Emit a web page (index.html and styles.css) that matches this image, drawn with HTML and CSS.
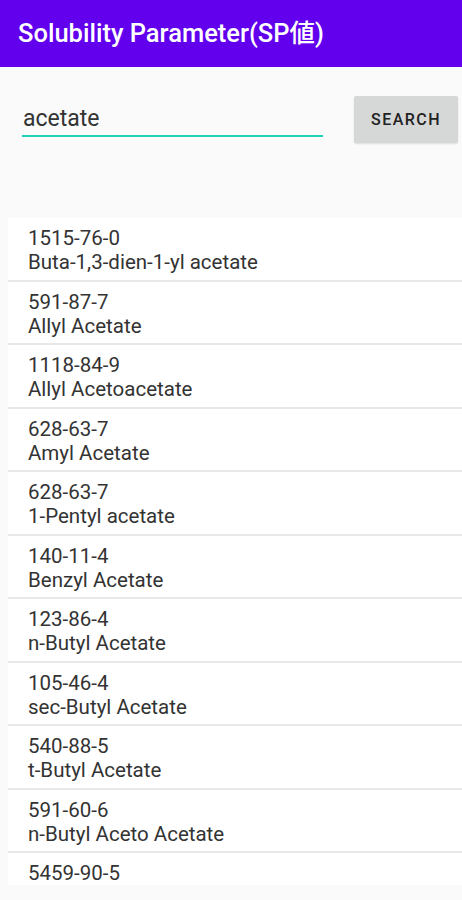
FILE: index.html
```html
<!DOCTYPE html>
<html lang="ja">

<head>
    <meta charset="UTF-8">
    <meta name="viewport" content="width=device-width, initial-scale=1.0">
    <title>Solubility Parameter</title>
    <link rel="stylesheet" href="styles.css">
</head>

<body>
    <header class="app-bar">
        <h1>Solubility Parameter(SP値)</h1>
    </header>

    <div class="search-row">
        <input type="text" class="query" value="acetate">
        <button class="search-btn">SEARCH</button>
    </div>

    <ul class="results">
        <li class="result"><span class="cas">1515-76-0</span><span class="name">Buta-1,3-dien-1-yl acetate</span></li>
        <li class="result"><span class="cas">591-87-7</span><span class="name">Allyl Acetate</span></li>
        <li class="result"><span class="cas">1118-84-9</span><span class="name">Allyl Acetoacetate</span></li>
        <li class="result"><span class="cas">628-63-7</span><span class="name">Amyl Acetate</span></li>
        <li class="result"><span class="cas">628-63-7</span><span class="name">1-Pentyl acetate</span></li>
        <li class="result"><span class="cas">140-11-4</span><span class="name">Benzyl Acetate</span></li>
        <li class="result"><span class="cas">123-86-4</span><span class="name">n-Butyl Acetate</span></li>
        <li class="result"><span class="cas">105-46-4</span><span class="name">sec-Butyl Acetate</span></li>
        <li class="result"><span class="cas">540-88-5</span><span class="name">t-Butyl Acetate</span></li>
        <li class="result"><span class="cas">591-60-6</span><span class="name">n-Butyl Aceto Acetate</span></li>
        <li class="result last"><span class="cas">5459-90-5</span></li>
    </ul>
</body>

</html>
```

FILE: styles.css
```css
* {
    padding: 0;
    margin: 0;
    box-sizing: border-box;
}

body {
    background-color: #fafafa;
    font-family: Roboto, "Noto Sans CJK JP", sans-serif;
    color: #333;
}

.app-bar {
    height: 67px;
    background-color: #6200ee;
    padding-left: 18px;
}

.app-bar h1 {
    font-size: 25.5px;
    font-weight: 500;
    line-height: 67px;
    color: white;
}

.search-row {
    display: flex;
    align-items: flex-start;
    padding: 29px 4px 0 22px;
}

.query {
    width: 301px;
    height: 41px;
    padding: 5px 0 0 1px;
    border: none;
    border-bottom: 2px solid #1fd0bb;
    background: transparent;
    font-family: Roboto, sans-serif;
    font-size: 23px;
    color: #333;
    outline: none;
}

.search-btn {
    margin-left: auto;
    width: 104px;
    height: 47px;
    border: none;
    border-radius: 2px;
    background-color: #d6d7d7;
    box-shadow: 0 1px 2px rgba(0, 0, 0, 0.12);
    font-family: Roboto, sans-serif;
    font-size: 16px;
    font-weight: 500;
    letter-spacing: 0.09em;
    color: #222;
}

.results {
    list-style: none;
    margin: 75px 0 0 8px;
    height: 667px;
    overflow: hidden;
    background-color: white;
}

.result {
    display: flex;
    flex-direction: column;
    height: 63.5px;
    padding: 10px 0 0 20px;
    border-bottom: 2px solid #e8e8e8;
    font-size: 20.5px;
    color: #333;
}

.result.last {
    height: auto;
    border-bottom: none;
}

.cas {
    line-height: 20px;
}

.name {
    line-height: 28px;
}
```
